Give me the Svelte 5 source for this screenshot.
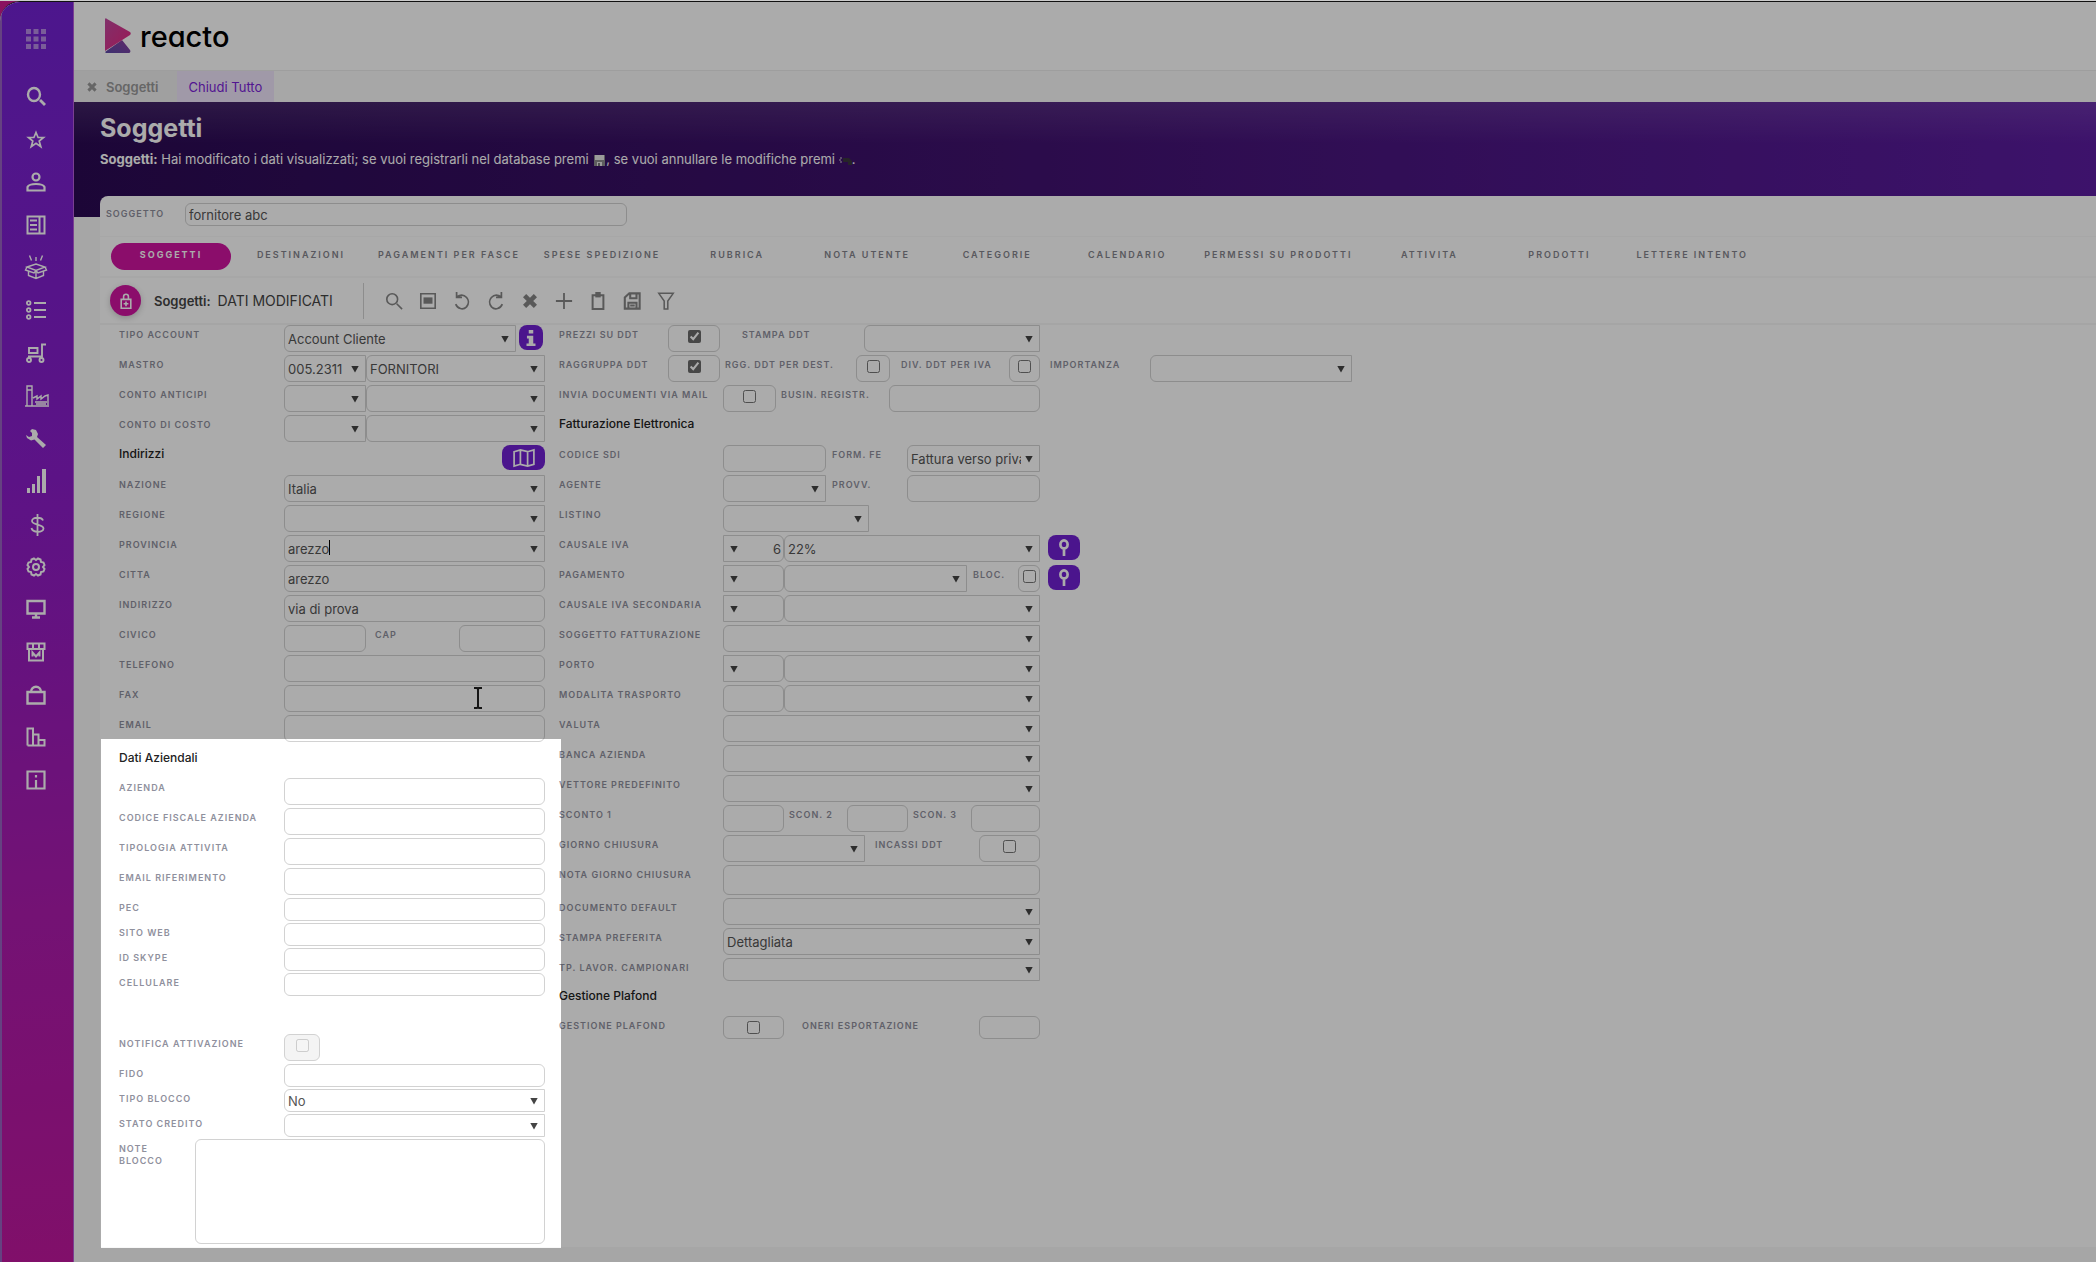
<script>
	// s: stroked path, f: filled path, all on a 20x20 grid
	const icons = {
		search: { s: "M14 7.5a6 6.5 0 1 1-12 0a6 6.5 0 1 1 12 0", f: "M13 14l2-2 5 5-2 2z", w: 2.4 },
		star: { s: "M10 2.5l2.1 5h5.4l-4.3 3.6 1.6 5.6-4.8-3.3-4.8 3.3 1.6-5.6L2.500 7.500h5.400z", w: 1.7 },
		person: { s: "M13.500 5a3.500 3.500 0 1 1-7 0a3.500 3.500 0 1 1 7 0M1.500 18.500v-3.500c2-4 15-4 17 0v3.500z", w: 2.2 },
		news: { s: "M1.500 1.500h17v17h-17zM13.500 1.500v17M4 5.500h7M4 10h7M4 14.500h7", w: 2 },
		box: { s: "M1 9l9-3 9 3-9 3.500zM1 9l-1.500 3L8 15l2-2.500 2 2.500 8.500-3L19 9M2.500 13.500v4L10 20.500l7.500-3v-4M10 12.500v8M10-1v4M3.500-2.500l2 5M16.500-2.500l-2 5", w: 1.4 },
		list: { s: "M4.500 3a1.800 1.800 0 1 1-3.600 0a1.800 1.800 0 1 1 3.600 0M4.500 10a1.800 1.800 0 1 1-3.600 0a1.800 1.800 0 1 1 3.600 0M4.500 17a1.800 1.800 0 1 1-3.600 0a1.800 1.800 0 1 1 3.600 0M8 3h12M8 10h12M8 17h12", w: 1.8 },
		cart: { s: "M20 1.500h-4v14M3 5h8.500v5H3zM2 13.500h14M5 17a2 2 0 1 1-4 0a2 2 0 1 1 4 0M17.500 17a2 2 0 1 1-4 0a2 2 0 1 1 4 0", w: 1.900 },
		factory: { s: "M-1 20h24M1 20V0h5v20M1 4h5M7 12l4-2v3l4-3v3l4-3 3-1v10M9 16h12M10 18h10", w: 1.400 },
		wrench: { f: "M6 0l4 1 2 4-1 3 9 8-3 3-8.500-8.500-3.500 1L1 9 0 6l3 2 3-1V4L4 2z" },
		bars: { f: "M1 17h3v5H1zM6 13h3v9H6zM11 5h3v17h-3zM16-2h4v24h-4z" },
		dollar: { s: "M17 6.500c-1-3.500-11-4-11 .5 0 4.500 11.500 2.500 11.500 7.500 0 4.500-11 4.500-12-.5M11.500 0v22", w: 1.800 },
		gear: { s: "M13 10a3 3 0 1 1-6 0a3 3 0 1 1 6 0M8 1.500l2 1.500 2-1.500 2.500 1 .5 2.500 2.500.5 1 2.500L17 10l1.500 2-1 2.500-2.500.5-.5 2.500-2.500 1-2-1.500-2 1.500-2.500-1-.5-2.500-2.500-.5-1-2.500L3 10 1.500 8l1-2.500L5 5l.5-2.500z", w: 2 },
		monitor: { s: "M1.500 2h17v12.500h-17zM10 15v3M6 18.500h8", w: 2.400 },
		store: { s: "M1.500 1.500h17v5.500h-17zM7 1.500V8M13 1.500V8M3 8v10.500h14V8M6.500 14.500v-4l3.500 4 3.500-4v4", w: 2 },
		bag: { s: "M1.500 7h17v11.500h-17zM5 7c0-7 10-7 10 0", w: 2.400 },
		chart: { s: "M1.500 18.500v-17H7v17M7 7.500h5.500v11M12.500 13h6v5.500h-17", w: 2 },
		info: { s: "M1.500 1.500h17v17h-17zM10 5v2.500M10 10v8", w: 2.200 },
		zoom: { s: "M14 8a6 6 0 1 1-12 0a6 6 0 1 1 12 0M13 13l6 6", w: 1.800 },
		panel: { s: "M2 2h16v16H2z", f: "M5 6h10v7H5z", w: 1.800 },
		undo: { s: "M4 5.500c9-6 17 4 11 11-4 4-10 2-12-3M4 0v6h6", w: 1.900 },
		redo: { s: "M16 5.500c-9-6-17 4-11 11 4 4 10 2 12-3M16 0v6h-6", w: 1.900 },
		close: { s: "M4 4l12 12M16 4L4 16", w: 5 },
		plus: { s: "M10 1v18M1 10h18", w: 2 },
		clipboard: { s: "M4 3.500h12V19H4z", f: "M7 0h6v6H7z", w: 2.200 },
		save: { s: "M2 18.500V6l5-4.500h11.500v17zM6 18v-6h9v6M8 2v5h7V2M8 15h5", w: 2.300 },
		filter: { s: "M2 1.500h16l-6 8.500v9H8v-9z", w: 1.700 },
		lock: { s: "M4 8h12v11H4zM7 8V4.500c0-4 6-4 6 0V8M10 10.500v6M7 13.500h6", w: 2 },
		map: { s: "M-1 3l7-2 8 2 7-2v16l-7 2-8-2-7 2zM6 1v16M14 3v16", w: 1.900 },
		key: { s: "M14 6a4 4.500 0 1 1-8 0a4 4.500 0 1 1 8 0M10 10v9", w: 3 },
		i: { f: "M7.500 1h5v4h-5zM5.500 7.500h7V16H15v3H5v-3h2.500v-5.500h-2z" },
	};

	const menu = ["search", "star", "person", "news", "box", "list", "cart", "factory", "wrench", "bars", "dollar", "gear", "monitor", "store", "bag", "chart", "info"];
	const tools = ["zoom", "panel", "undo", "redo", "close", "plus", "clipboard", "save", "filter"];
	const tabs = ["Soggetti", "Destinazioni", "Pagamenti per fasce", "Spese spedizione", "Rubrica", "Nota utente", "Categorie", "Calendario", "Permessi su prodotti", "Attivita", "Prodotti", "Lettere intento"];

	// Cell builders; ml is the space left of the cell
	const L = (text, w, ml = 0) => ({ kind: "label", text, w, ml });
	const T = (w, value = "", ml = 0) => ({ kind: "text", w, value, ml });
	const S = (w, value = "") => ({ kind: "select", w, value, ml: 0 });
	const R = (w, value = "") => ({ kind: "select", w, value, ml: 0, reverse: true });
	const C = (w, checked = false, disabled = false) => ({ kind: "check", w, checked, disabled, ml: 0 });
	const B = (icon, title, w, ml) => ({ kind: "button", icon, title, w, ml });
	const row = (...cells) => ({ cells });
	const small = (...cells) => ({ cells, size: "small" });

	// The second control of a code + description pair has no label of its own
	const pairName = (cells, x) => (cells[x - 1].kind === "label" ? undefined : `${cells[0].text}, descrizione`);

	const account = [
		row(L("Tipo account", 165), S(232, "Account Cliente"), B("i", "Informazioni", 24, 3)),
		row(L("Mastro", 165), S(82, "005.2311"), S(179, "FORNITORI")),
		row(L("Conto anticipi", 165), S(82), S(179)),
		row(L("Conto di costo", 165), S(82), S(179)),
		{ title: "Indirizzi", cells: [B("map", "Mappa", 43, 0)] },
		row(L("Nazione", 165), S(261, "Italia")),
		row(L("Regione", 165), S(261)),
		row(L("Provincia", 165), { kind: "typing", w: 261, value: "arezzo", ml: 0 }),
		row(L("Citta", 165), T(261, "arezzo")),
		row(L("Indirizzo", 165), T(261, "via di prova")),
		row(L("Civico", 165), T(82), L("Cap", 84, 9), T(86)),
		row(L("Telefono", 165), T(261)),
		row(L("Fax", 165), { ...T(261), pointer: true }),
		row(L("Email", 165), T(261)),
	];

	const company = [
		{ title: "Dati Aziendali", size: "section", cells: [] },
		row(L("Azienda", 165), T(261)),
		row(L("Codice fiscale azienda", 165), T(261)),
		row(L("Tipologia attivita", 165), T(261)),
		row(L("Email riferimento", 165), T(261)),
		small(L("Pec", 165), T(261)),
		small(L("Sito web", 165), T(261)),
		small(L("Id skype", 165), T(261)),
		{ ...small(L("Cellulare", 165), T(261)), last: true },
		row(L("Notifica attivazione", 165), C(36, false, true)),
		small(L("Fido", 165), T(261)),
		small(L("Tipo blocco", 165), S(261, "No")),
		small(L("Stato credito", 165), S(261)),
		{ size: "notes", cells: [L("Note blocco", 60), { kind: "area", w: 350, ml: 16 }] },
	];

	const billing = [
		row(L("Prezzi su ddt", 109), C(52, true), L("Stampa ddt", 122, 22), S(176)),
		row(L("Raggruppa ddt", 109), C(52, true), L("Rgg. ddt per dest.", 131, 5), C(34), L("Div. ddt per iva", 108, 11), C(31), L("Importanza", 100, 10), S(202)),
		row(L("Invia documenti via mail", 164), C(53), L("Busin. registr.", 108, 5), T(151)),
		{ title: "Fatturazione Elettronica", cells: [] },
		row(L("Codice sdi", 164), T(103), L("Form. fe", 75, 6), S(133, "Fattura verso privati")),
		row(L("Agente", 164), S(103), L("Provv.", 75, 6), T(133)),
		row(L("Listino", 164), S(146)),
		row(L("Causale iva", 164), R(61, "6"), S(256, "22%"), B("key", "Cerca causale", 32, 8)),
		row(L("Pagamento", 164), R(61), S(183), L("Bloc.", 45, 6), C(22), B("key", "Cerca pagamento", 32, 8)),
		row(L("Causale iva secondaria", 164), R(61), S(256)),
		row(L("Soggetto fatturazione", 164), S(317)),
		row(L("Porto", 164), R(61), S(256)),
		row(L("Modalita trasporto", 164), T(61), S(256)),
		row(L("Valuta", 164), S(317)),
		row(L("Banca azienda", 164), S(317)),
		row(L("Vettore predefinito", 164), S(317)),
		row(L("Sconto 1", 164), T(61), L("Scon. 2", 58, 5), T(61), L("Scon. 3", 58, 5), T(69)),
		row(L("Giorno chiusura", 164), S(142), L("Incassi ddt", 104, 10), C(61)),
		{ ...row(L("Nota giorno chiusura", 164), T(317)), size: "section" },
		row(L("Documento default", 164), S(317)),
		row(L("Stampa preferita", 164), S(317, "Dettagliata")),
		small(L("Tp. lavor. campionari", 164), S(317)),
		{ title: "Gestione Plafond", size: "section", cells: [] },
		small(L("Gestione plafond", 164), C(61), L("Oneri esportazione", 177, 18), T(61)),
	];
</script>

{#snippet icon(name)}
	<svg class="icon" viewBox="0 0 20 20" aria-hidden="true">
		{#if icons[name].s}<path d={icons[name].s} fill="none" stroke="currentColor" stroke-width={icons[name].w} />{/if}
		{#if icons[name].f}<path d={icons[name].f} fill="currentColor" />{/if}
	</svg>
{/snippet}

{#snippet fields(rows, group)}
	{#each rows as r, y}
		<div class="row {r.size ?? ''}" class:last={r.last}>
			{#if r.title}<h2>{r.title}</h2>{/if}
			{#each r.cells as c, x}
				{@const id = `${group}-${y}-${x}`}
				<div class="cell" style="width:{c.w}px;margin-left:{c.ml}px">
					{#if c.kind === "label"}
						<label for="{group}-{y}-{x + 1}">{c.text}</label>
					{:else if c.kind === "text"}
						<input class="field" type="text" {id} value={c.value} />
						{#if c.pointer}
							<svg class="pointer" viewBox="0 0 10 22" aria-hidden="true">
								<path d="M1 1h3l1 1 1-1h3M1 21h3l1-1 1 1h3M5 2v18" fill="none" stroke="#222" stroke-width="2" />
							</svg>
						{/if}
					{:else if c.kind === "typing"}
						<span class="combo">
							<input class="field" type="text" {id} value={c.value} />
							<span class="caret"><span>{c.value}</span></span>
						</span>
					{:else if c.kind === "select"}
						<span class="combo" class:reverse={c.reverse}>
							<select class="field" {id} aria-label={pairName(r.cells, x)}>
								<option>{c.value}</option>
							</select>
						</span>
					{:else if c.kind === "check"}
						<span class="field tick" class:off={c.disabled}>
							<input type="checkbox" {id} checked={c.checked} disabled={c.disabled} />
						</span>
					{:else if c.kind === "area"}
						<textarea class="field" {id}></textarea>
					{:else}
						<button class="action" title={c.title} aria-label={c.title}>{@render icon(c.icon)}</button>
					{/if}
				</div>
			{/each}
		</div>
	{/each}
{/snippet}

<div class="app">
	<aside>
		<button class="apps" aria-label="Applicazioni">
			<svg viewBox="0 0 20 20" aria-hidden="true">
				<path d="M0 0h5v5H0zM7.500 0h5v5h-5zM15 0h5v5h-5zM0 7.500h5v5H0zM7.500 7.500h5v5h-5zM15 7.500h5v5h-5zM0 15h5v5H0zM7.500 15h5v5h-5zM15 15h5v5h-5z" fill="currentColor" />
			</svg>
		</button>
		<nav>
			{#each menu as name}
				<button aria-label={name}>{@render icon(name)}</button>
			{/each}
		</nav>
	</aside>

	<main>
		<header>
			<svg class="mark" viewBox="0 0 26 36" aria-hidden="true">
				<defs>
					<linearGradient id="up" x1="0" y1="0" x2="1" y2="1">
						<stop offset="0" stop-color="#c0489f" />
						<stop offset="1" stop-color="#e8267f" />
					</linearGradient>
					<linearGradient id="down" x1="0" y1="1" x2="1" y2="0">
						<stop offset="0" stop-color="#5b49a8" />
						<stop offset="1" stop-color="#8d3f9f" />
					</linearGradient>
				</defs>
				<path d="M0 34L17 22l8 10c1 1 0 3-1 3H1z" fill="url(#down)" />
				<path d="M0 2c0-2 1-2 2-1l23 13c1 1 1 2 0 3L0 33z" fill="url(#up)" />
			</svg>
			<span class="brand">reacto</span>
		</header>

		<div class="pages">
			<button class="page">{@render icon("close")}Soggetti</button>
			<button class="close-all">Chiudi Tutto</button>
		</div>

		<section class="banner">
			<h1>Soggetti</h1>
			<p>
				<b>Soggetti:</b> Hai modificato i dati visualizzati; se vuoi registrarli nel database premi
				<svg class="disk" viewBox="0 0 11 11" aria-hidden="true"><path d="M0 0h11v11H0z" fill="#8c8c8c" /><path d="M1 0h9v5H1zM3 7h5v4H3z" fill="#e8e8e8" /><path d="M4 8h2v3H4z" fill="#777" /></svg>, se vuoi annullare le modifiche premi
				<svg class="undo" viewBox="0 0 13 11" aria-hidden="true"><path d="M3 3H1v4h2" fill="none" stroke="#ccc" stroke-dasharray="2 1" /><path d="M4 3h6l3 3v4H9V7H4z" fill="#3a363c" /></svg>.
			</p>
		</section>

		<div class="card">
			<div class="subject">
				<label for="subject">Soggetto</label>
				<input class="field" id="subject" type="text" value="fornitore abc" />
			</div>

			<div class="tabs">
				{#each tabs as tab, n}
					<button class:active={n === 0}>{tab}</button>
				{/each}
			</div>

			<div class="toolbar">
				<span class="state">{@render icon("lock")}</span>
				<p><b>Soggetti:</b> DATI MODIFICATI</p>
				<div class="tools">
					{#each tools as name}
						<button aria-label={name}>{@render icon(name)}</button>
					{/each}
				</div>
			</div>

			<form>
				<div class="left">
					{@render fields(account, "account")}
					<div class="spotlight">
						{@render fields(company, "company")}
					</div>
				</div>
				<div class="right">
					{@render fields(billing, "billing")}
				</div>
			</form>
		</div>
	</main>
</div>

<style>
	:global(body) {
		margin: 0;
		border-top: 1px solid #ccc;
		background: #8a1260;
		font-family: Inter, "Liberation Sans", sans-serif;
	}

	.app {
		box-sizing: border-box;
		display: flex;
		min-height: calc(100vh - 1px);
		overflow: hidden;
		border-top: 1px solid #111;
		border-radius: 20px 0 0 0;
		background: #f8f8f8;
		font-size: 13px;
		color: #444;
	}

	button {
		display: flex;
		align-items: center;
		justify-content: center;
		padding: 0;
		border: 0;
		background: none;
		color: inherit;
		font: inherit;
		cursor: pointer;
	}

	h1, h2, p { margin: 0; }

	.icon {
		display: block;
		width: 20px;
		height: 20px;
		overflow: visible;
	}

	aside {
		box-sizing: border-box;
		flex: 0 0 74px;
		border-left: 2px solid #9763c0;
		border-right: 1px solid #b65fd8;
		background: linear-gradient(175deg, #7222d2 0%, #8a1dc8 38%, #ad1bae 72%, #c0179e 100%);
		color: #fff;
	}

	.apps {
		width: 20px;
		height: 20px;
		margin: 27px 0 0 24px;
		color: #b68be4;
	}

	nav {
		display: flex;
		flex-direction: column;
		justify-content: space-between;
		height: 703px;
		margin: 38px 0 0 24px;
	}

	nav button { width: 20px; }

	main {
		flex: 1;
		min-width: 0;
	}

	header {
		display: flex;
		align-items: center;
		gap: 9px;
		height: 68px;
		padding-left: 31px;
		border-bottom: 1px solid #ececec;
		background: #fff;
	}

	.mark {
		width: 26px;
		height: 36px;
	}

	.brand {
		padding-top: 2px;
		color: #000;
		font-size: 29px;
		font-weight: 500;
		font-feature-settings: "cv11";
		line-height: 36px;
	}

	.pages {
		display: flex;
		height: 31px;
		background: #fafafa;
	}

	.page {
		gap: 8px;
		padding: 0 18px 0 12px;
		background: #efefef;
		color: #999;
		font-weight: 600;
	}

	.page .icon {
		width: 12px;
		height: 12px;
	}

	.close-all {
		padding: 0 12px;
		background: #efe5fb;
		color: #7b22d8;
	}

	.banner {
		box-sizing: border-box;
		height: 115px;
		padding: 11px 0 0 26px;
		background:
			linear-gradient(180deg, rgba(255, 255, 255, 0.1), transparent 36%),
			linear-gradient(90deg, #2b0a53, #40126f 46%, #5b1ca0);
		color: #fff;
	}

	h1 {
		font-size: 25px;
		line-height: 30px;
	}

	.banner p {
		margin-top: 6px;
		line-height: 20px;
	}

	.disk {
		width: 11px;
		height: 11px;
		margin: 0 1px 0 2px;
		vertical-align: -2px;
	}

	.undo {
		width: 13px;
		height: 11px;
		vertical-align: -2px;
	}

	.card {
		margin: -21px 0 0 26px;
		border-radius: 8px 0 0 0;
		background: #fff;
	}

	label {
		padding-top: 4px;
		color: #8f909d;
		font-size: 9px;
		font-weight: 600;
		line-height: 12px;
		letter-spacing: 1px;
		text-transform: uppercase;
	}

	.field {
		box-sizing: border-box;
		width: 100%;
		height: 100%;
		margin: 0;
		padding: 0 3px;
		border: 1px solid #d2d2d2;
		border-radius: 6px;
		outline: 0;
		background: #fff;
		color: #555;
		font: 13px Inter, "Liberation Sans", sans-serif;
	}

	.subject {
		display: flex;
		height: 33px;
		padding: 7px 0 0 6px;
		border-bottom: 1px solid #fafafa;
	}

	.subject label {
		width: 79px;
		padding-top: 5px;
	}

	.subject .field {
		width: 442px;
		height: 23px;
	}

	.tabs {
		display: flex;
		gap: 10px;
		padding: 6px 11px;
		border-bottom: 2px solid #f9f9f9;
	}

	.tabs button {
		min-width: 120px;
		height: 27px;
		padding: 0 7px 4px;
		border-radius: 14px;
		color: #84848c;
		font-size: 9px;
		font-weight: 600;
		letter-spacing: 2px;
		text-transform: uppercase;
		white-space: nowrap;
	}

	.tabs .active {
		background: #cf14a0;
		color: #fff;
		font-weight: 700;
	}

	.toolbar {
		display: flex;
		align-items: center;
		height: 45px;
		padding-left: 10px;
		border-bottom: 2px solid #f7f7f7;
		font-size: 14px;
	}

	.toolbar b {
		margin-right: 3px;
		font-size: 13px;
		font-weight: 600;
	}

	.toolbar p { width: 209px; }

	.state {
		display: grid;
		place-items: center;
		width: 31px;
		height: 31px;
		margin-right: 13px;
		border-radius: 50%;
		background: #cf14a0;
		box-shadow: 0 2px 6px rgba(0, 0, 0, 0.2);
		color: #fff;
	}

	.state .icon {
		width: 16px;
		height: 16px;
	}

	.tools {
		display: flex;
		gap: 16px;
		height: 36px;
		padding-left: 21px;
		border-left: 1px solid #d2d2d2;
		color: #858585;
	}

	.tools .icon {
		width: 18px;
		height: 18px;
	}

	form {
		display: flex;
		gap: 14px;
		padding-left: 19px;
	}

	.left { flex: 0 0 426px; }

	.row {
		box-sizing: border-box;
		display: flex;
		height: 30px;
		padding-bottom: 3px;
	}

	.small {
		height: 25px;
		padding-bottom: 2px;
	}

	.section { height: 33px; }

	.notes { height: 108px; }

	.last { margin-bottom: 36px; }

	.section h2 { padding-top: 4px; }

	h2 {
		flex: 1;
		color: #222;
		font-size: 12px;
		font-weight: 500;
		line-height: 18px;
	}

	.cell {
		position: relative;
		flex: none;
		display: flex;
	}

	.combo {
		position: relative;
		flex: 1;
		min-width: 0;
	}

	.combo .field {
		appearance: none;
		padding-right: 18px;
		border-radius: 6px 0 0 6px;
	}

	.combo::after {
		content: "";
		position: absolute;
		top: 50%;
		right: 7px;
		width: 8px;
		height: 7px;
		margin-top: -3px;
		background: #444;
		clip-path: polygon(0 0, 100% 0, 50% 100%);
		pointer-events: none;
	}

	.reverse .field {
		padding: 0 2px 0 20px;
		border-radius: 0 6px 6px 0;
		text-align-last: right;
	}

	.reverse::after {
		right: auto;
		left: 7px;
	}

	.caret {
		position: absolute;
		top: 5px;
		left: 4px;
		height: 15px;
		border-right: 1px solid #000;
		pointer-events: none;
	}

	.caret span { visibility: hidden; }

	.pointer {
		position: absolute;
		top: 2px;
		right: 62px;
		width: 10px;
		height: 22px;
	}

	.tick {
		display: flex;
		justify-content: center;
		padding-top: 4px;
	}

	.tick input {
		width: 13px;
		height: 13px;
		margin: 0;
		accent-color: #6a6a6a;
	}

	.off { background: #f4f4f4; }

	textarea.field {
		padding: 4px;
		resize: none;
	}

	.action {
		width: 100%;
		height: 25px;
		border-radius: 8px;
		background: #7120d2;
		color: #fff;
	}

	.action .icon {
		width: 18px;
		height: 18px;
	}

	.spotlight { position: relative; }

	/* Dims everything outside the highlighted group */
	.spotlight::after {
		content: "";
		position: absolute;
		z-index: 10;
		inset: -6px -16px -1px -18px;
		box-shadow: 0 0 0 200vmax rgba(0, 0, 0, 0.33);
		pointer-events: none;
	}
</style>
